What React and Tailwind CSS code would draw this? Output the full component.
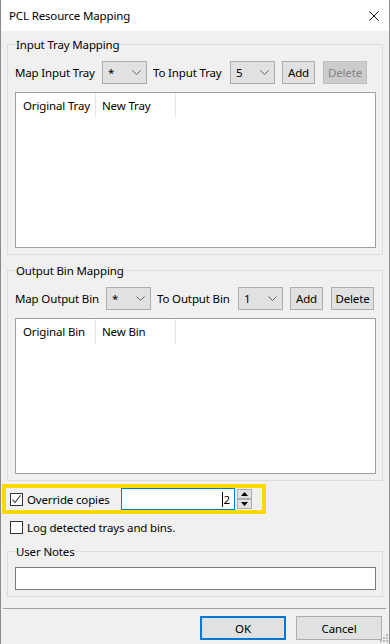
import React from "react";

function Combo({ value, ml }) {
  return (
    <div className={"w-[45px] h-[23px] bg-[#e1e1e1] border border-[#adadad] flex items-center pl-[5px] pr-[5px] shrink-0 " + ml}>
      <span className="flex-1 leading-none">{value}</span>
      <svg width="9" height="5" viewBox="0 0 9 5" className="shrink-0">
        <path d="M0.5 0.5 L4.5 4.5 L8.5 0.5" fill="none" stroke="#606060" strokeWidth="1" />
      </svg>
    </div>
  );
}

function Btn({ children, w, ml, disabled }) {
  return (
    <div
      className={
        "h-[23px] flex items-center justify-center shrink-0 border " +
        w +
        " " +
        ml +
        (disabled ? " bg-[#cccccc] border-[#bfbfbf] text-[#838383]" : " bg-[#e1e1e1] border-[#adadad] text-black")
      }
    >
      {children}
    </div>
  );
}

function Check({ checked }) {
  return (
    <span className="w-[13px] h-[13px] border border-[#333333] bg-white flex items-center justify-center shrink-0">
      {checked && (
        <svg width="11" height="11" viewBox="0 0 11 11">
          <path d="M1.5 5.5 L4 8.5 L9.5 1.5" fill="none" stroke="#333333" strokeWidth="1.1" />
        </svg>
      )}
    </span>
  );
}

function ListView({ c1, c2, h }) {
  return (
    <div className={"mt-[8px] w-[361px] bg-white border border-[#a0a0a0] " + h}>
      <div className="flex h-[25px] items-stretch">
        <div className="w-[80px] pl-[7px] flex items-center border-r border-[#e5e5e5]">{c1}</div>
        <div className="w-[80px] pl-[6px] flex items-center border-r border-[#e5e5e5]">{c2}</div>
      </div>
    </div>
  );
}

export default function App() {
  return (
    <div className="w-[390px] h-[644px] bg-[#f0f0f0] border-x border-[#8a8a8a] flex flex-col overflow-hidden relative font-['Noto_Sans',sans-serif] text-[11.5px] tracking-[-0.15px] text-black leading-[15px]">
      {/* Title bar */}
      <div className="h-[31px] bg-white flex items-center pl-[8px] shrink-0">
        <span>PCL Resource Mapping</span>
        <svg width="10" height="10" viewBox="0 0 10 10" className="ml-auto mr-[10px]">
          <path d="M0.5 0.5 L9.5 9.5 M9.5 0.5 L0.5 9.5" stroke="#111" strokeWidth="1" />
        </svg>
      </div>

      <div className="px-[6px] flex flex-col">
        {/* Input Tray Mapping */}
        <fieldset className="mt-[6px] border border-[#dcdcdc] pl-[7px] pr-[6px] pb-[6px]">
          <legend className="px-[1px] leading-[15px]">Input Tray Mapping</legend>
          <div className="mt-[9px] h-[23px] flex items-center">
            <span className="w-[87px] shrink-0">Map Input Tray</span>
            <Combo value="*" ml="" />
            <span className="ml-[6px] w-[77px] shrink-0">To Input Tray</span>
            <Combo value="5" ml="" />
            <Btn w="w-[33px]" ml="ml-[7px]">Add</Btn>
            <Btn w="w-[44px]" ml="ml-[8px]" disabled>Delete</Btn>
          </div>
          <ListView c1="Original Tray" c2="New Tray" h="h-[156px]" />
        </fieldset>

        {/* Output Bin Mapping */}
        <fieldset className="mt-[8px] border border-[#dcdcdc] pl-[7px] pr-[6px] pb-[6px]">
          <legend className="px-[1px] leading-[15px]">Output Bin Mapping</legend>
          <div className="mt-[9px] h-[23px] flex items-center">
            <span className="w-[91px] shrink-0">Map Output Bin</span>
            <Combo value="*" ml="" />
            <span className="ml-[6px] w-[81px] shrink-0">To Output Bin</span>
            <Combo value="1" ml="" />
            <Btn w="w-[33px]" ml="ml-[7px]">Add</Btn>
            <Btn w="w-[43px]" ml="ml-[8px]">Delete</Btn>
          </div>
          <ListView c1="Original Bin" c2="New Bin" h="h-[156px]" />
        </fieldset>

        {/* Override copies (highlighted) */}
        <div className="mt-[3px] ml-[-5px] w-[264px] h-[30px] border-4 border-[#ffd800] flex items-center">
          <div className="ml-[4px] flex items-center">
            <Check checked />
            <span className="ml-[4px]">Override copies</span>
          </div>
          <div className="ml-auto mr-[10px] flex items-center h-full">
            <div className="w-[114px] h-[22px] bg-white border border-[#0078d7] flex items-center justify-end pr-[4px]">
              <span className="w-px h-[15px] bg-black mr-[1px]" />
              <span>2</span>
            </div>
            <div className="ml-[2px] w-[15px] h-[22px] flex flex-col justify-between py-[1px]">
              <div className="h-[10px] bg-[#e1e1e1] border border-[#adadad] flex items-center justify-center">
                <svg width="7" height="4" viewBox="0 0 7 4"><path d="M0 4 L3.5 0 L7 4 Z" fill="#000" /></svg>
              </div>
              <div className="h-[10px] bg-[#e1e1e1] border border-[#adadad] flex items-center justify-center">
                <svg width="7" height="4" viewBox="0 0 7 4"><path d="M0 0 L3.5 4 L7 0 Z" fill="#000" /></svg>
              </div>
            </div>
          </div>
        </div>

        {/* Log checkbox */}
        <div className="mt-[6px] ml-[3px] h-[14px] flex items-center">
          <Check />
          <span className="ml-[4px]">Log detected trays and bins.</span>
        </div>

        {/* User notes */}
        <fieldset className="mt-[10px] border border-[#dcdcdc] pl-[7px] pr-[6px] pb-[6px]">
          <legend className="px-[1px] leading-[15px]">User Notes</legend>
          <div className="mt-[8px] w-[361px] h-[23px] bg-white border border-[#7a7a7a]" />
        </fieldset>
      </div>

      {/* Separator */}
      <div className="mt-[11px] ml-[2px] w-[383px] h-px bg-[#a0a0a0]" />

      {/* Buttons */}
      <div className="mt-[7px] flex justify-end pr-[7px] gap-[10px]">
        <div className="w-[86px] h-[24px] bg-[#e1e1e1] border-2 border-[#0078d7] flex items-center justify-center">OK</div>
        <div className="w-[86px] h-[24px] bg-[#e1e1e1] border border-[#adadad] flex items-center justify-center">Cancel</div>
      </div>

      {/* Resize grip */}
      <svg width="10" height="10" viewBox="0 0 10 10" className="absolute right-[1px] bottom-[2px]">
        <rect x="8" y="2" width="2" height="2" fill="#b8b8b8" />
        <rect x="5" y="5" width="2" height="2" fill="#b8b8b8" />
        <rect x="8" y="5" width="2" height="2" fill="#b8b8b8" />
        <rect x="2" y="8" width="2" height="2" fill="#b8b8b8" />
        <rect x="5" y="8" width="2" height="2" fill="#b8b8b8" />
        <rect x="8" y="8" width="2" height="2" fill="#b8b8b8" />
      </svg>
    </div>
  );
}
